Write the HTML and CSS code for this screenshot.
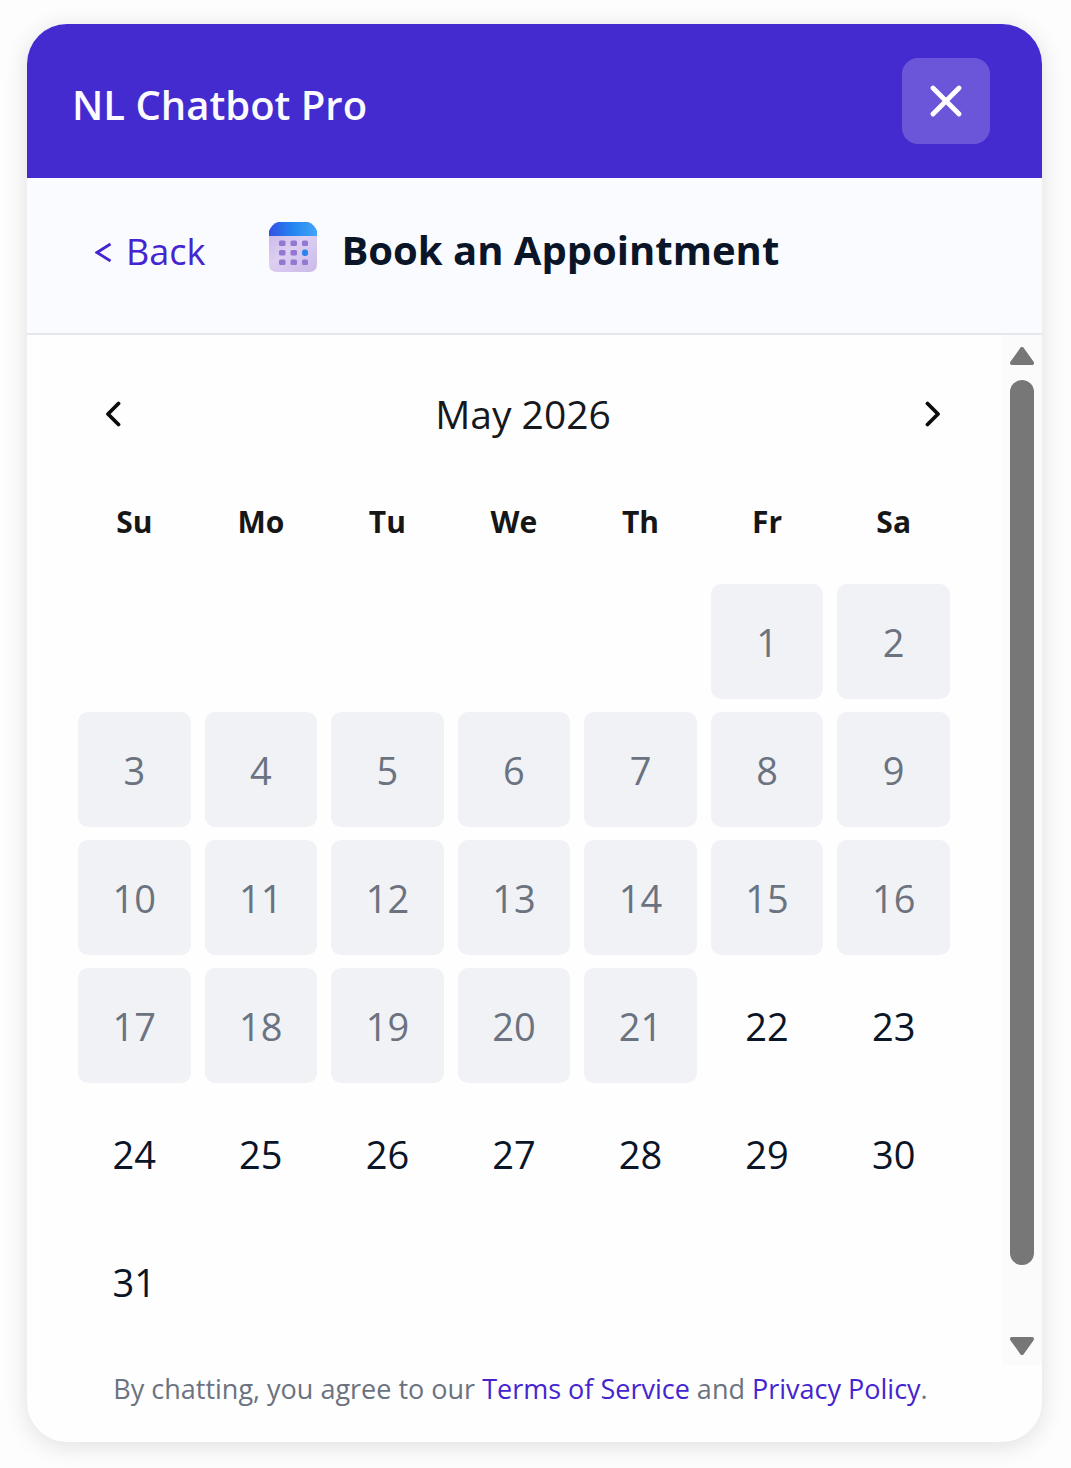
FILE: index.html
```html
<!DOCTYPE html>
<html lang="en">
<head>
<meta charset="utf-8">
<meta name="viewport" content="width=device-width, initial-scale=1">
<title>NL Chatbot Pro</title>
<link rel="stylesheet" href="styles.css">
</head>
<body>
<main class="widget">
  <header class="widget-header">
    <h1 class="widget-title">NL Chatbot Pro</h1>
    <button class="close-button" type="button" aria-label="Close">
      <svg width="32" height="32" viewBox="0 0 32 32" fill="none" stroke="#fff" stroke-width="4.800" stroke-linecap="round"><path d="M3 3 29 29M29 3 3 29"/></svg>
    </button>
  </header>

  <div class="toolbar">
    <button class="back-button" type="button"><svg width="17" height="20" viewBox="0 0 17 20" fill="none" stroke="currentColor" stroke-width="2.800" aria-hidden="true"><path d="M15.500 2 2 10.500l13.500 8.500"/></svg>Back</button>
    <h2 class="toolbar-title">
      <svg class="calendar-icon" width="48" height="50" viewBox="0 0 48 50" aria-hidden="true">
        <defs>
          <linearGradient id="top" x1="0" y1="0" x2="1" y2="0"><stop offset="0" stop-color="#3350e4"/><stop offset=".5" stop-color="#2485f0"/><stop offset="1" stop-color="#43a5f8"/></linearGradient>
          <linearGradient id="page" x1="0" y1="0" x2="1" y2="1"><stop offset="0" stop-color="#cbbce9"/><stop offset=".4" stop-color="#dccff1"/><stop offset="1" stop-color="#c9b9e9"/></linearGradient>
        </defs>
        <path d="M0 14h48v28q0 8-8 8H8q-8 0-8-8z" fill="url(#page)"/>
        <path d="M0 14V9Q3 2 9 0h30q6 2 9 9v5z" fill="url(#top)"/>
        <g fill="#9476d3">
          <rect x="10" y="18.500" width="6.500" height="5.500" rx="1.500"/><rect x="21.500" y="18.500" width="6.500" height="5.500" rx="1.500"/><rect x="33" y="18.500" width="6" height="5.500" rx="1.500"/>
          <rect x="10" y="28" width="6.500" height="5.500" rx="1.500"/><rect x="21.500" y="28" width="6.500" height="5.500" rx="1.500"/>
          <rect x="10" y="37.500" width="6.500" height="5.500" rx="1.500"/><rect x="21.500" y="37.500" width="6.500" height="5.500" rx="1.500"/><rect x="33" y="37.500" width="6" height="5.500" rx="1.500"/>
        </g>
        <rect x="33" y="27.500" width="6" height="6.500" rx="2.500" fill="#2b83ee"/>
      </svg>
      Book an Appointment
    </h2>
  </div>

  <div class="content">
    <section class="calendar" aria-labelledby="month">
      <div class="month-bar">
        <button class="month-button" type="button" aria-label="Previous month">
          <svg width="18" height="26" viewBox="0 0 18 26" fill="none" stroke="#0b0b0f" stroke-width="3.800" stroke-linecap="round" stroke-linejoin="round"><path d="M14.500 2.500 4 13l10.500 10.500"/></svg>
        </button>
        <h3 class="month-name" id="month">May 2026</h3>
        <button class="month-button" type="button" aria-label="Next month">
          <svg width="18" height="26" viewBox="0 0 18 26" fill="none" stroke="#0b0b0f" stroke-width="3.800" stroke-linecap="round" stroke-linejoin="round"><path d="M3.500 2.500 14 13 3.500 23.500"/></svg>
        </button>
      </div>
      <table class="days">
        <thead>
          <tr><th scope="col">Su</th><th scope="col">Mo</th><th scope="col">Tu</th><th scope="col">We</th><th scope="col">Th</th><th scope="col">Fr</th><th scope="col">Sa</th></tr>
        </thead>
        <tbody>
          <tr><td></td><td></td><td></td><td></td><td></td><td><button class="day" disabled>1</button></td><td><button class="day" disabled>2</button></td></tr>
          <tr><td><button class="day" disabled>3</button></td><td><button class="day" disabled>4</button></td><td><button class="day" disabled>5</button></td><td><button class="day" disabled>6</button></td><td><button class="day" disabled>7</button></td><td><button class="day" disabled>8</button></td><td><button class="day" disabled>9</button></td></tr>
          <tr><td><button class="day" disabled>10</button></td><td><button class="day" disabled>11</button></td><td><button class="day" disabled>12</button></td><td><button class="day" disabled>13</button></td><td><button class="day" disabled>14</button></td><td><button class="day" disabled>15</button></td><td><button class="day" disabled>16</button></td></tr>
          <tr><td><button class="day" disabled>17</button></td><td><button class="day" disabled>18</button></td><td><button class="day" disabled>19</button></td><td><button class="day" disabled>20</button></td><td><button class="day" disabled>21</button></td><td><button class="day">22</button></td><td><button class="day">23</button></td></tr>
          <tr><td><button class="day">24</button></td><td><button class="day">25</button></td><td><button class="day">26</button></td><td><button class="day">27</button></td><td><button class="day">28</button></td><td><button class="day">29</button></td><td><button class="day">30</button></td></tr>
          <tr><td><button class="day">31</button></td><td></td><td></td><td></td><td></td><td></td><td></td></tr>
        </tbody>
      </table>
    </section>

    <div class="scrollbar">
      <button class="scroll-button scroll-up" type="button" aria-label="Scroll up">
        <svg width="24" height="18" viewBox="0 0 24 18" fill="#777" stroke="#777" stroke-width="4" stroke-linejoin="round"><path d="M12 2 22 16H2z"/></svg>
      </button>
      <div class="scroll-thumb"></div>
      <div class="scroll-rest"></div>
      <button class="scroll-button scroll-down" type="button" aria-label="Scroll down">
        <svg width="24" height="18" viewBox="0 0 24 18" fill="#777" stroke="#777" stroke-width="4" stroke-linejoin="round"><path d="M12 16 2 2h20z"/></svg>
      </button>
    </div>
  </div>

  <footer class="legal">By chatting, you agree to our <a href="#terms">Terms of Service</a> and <a href="#privacy">Privacy Policy</a>.</footer>
</main>
</body>
</html>
```

FILE: styles.css
```css
* {
  box-sizing: border-box;
}

body {
  margin: 0;
  padding: 24px 29px 26px 27px;
  background: #fdfdfd;
  font-family: "Open Sans", "Noto Sans", sans-serif;
  color: #0b1528;
}

button {
  margin: 0;
  padding: 0;
  border: 0;
  background: none;
  font: inherit;
  color: inherit;
  cursor: pointer;
}

svg {
  display: block;
}

h1,
h2,
h3 {
  margin: 0;
}

.widget {
  border-radius: 40px;
  background: #fefefe;
  box-shadow: 0 4px 24px rgba(0, 0, 0, 0.12);
  overflow: hidden;
}

.widget-header {
  display: flex;
  align-items: center;
  justify-content: space-between;
  height: 154px;
  padding: 0 52px 0 45px;
  background: #432bcf;
  color: #fafaff;
}

.widget-title {
  padding-top: 8px;
  font-size: 40px;
  font-weight: 600;
  line-height: 56px;
}

.close-button {
  display: grid;
  place-items: center;
  width: 88px;
  height: 86px;
  border-radius: 16px;
  background: #6b55d8;
}

.toolbar {
  display: flex;
  align-items: center;
  gap: 64px;
  height: 157px;
  padding: 0 68px 12px;
  border-bottom: 2px solid #e5e7eb;
  background: #fafbfe;
}

.back-button {
  display: flex;
  align-items: center;
  gap: 14px;
  padding-top: 4px;
  font-size: 36px;
  line-height: 56px;
  color: #4525cf;
}

.toolbar-title {
  display: flex;
  align-items: center;
  gap: 24px;
  font-size: 40px;
  font-weight: 700;
  line-height: 56px;
}

.calendar-icon {
  margin-bottom: 6px;
}

.content {
  display: flex;
}

.calendar {
  flex: 1;
  padding: 51px 38px 13px 37px;
}

.month-bar {
  display: flex;
  align-items: center;
  justify-content: space-between;
  margin-bottom: 18px;
  padding: 0 3px 0 21px;
}

.month-button {
  display: grid;
  place-items: center;
  width: 56px;
  height: 56px;
}

.month-name {
  font-size: 39px;
  font-weight: 400;
  line-height: 56px;
  color: #17181c;
}

.days {
  width: 100%;
  table-layout: fixed;
  border-collapse: separate;
  border-spacing: 14px 13px;
}

.days th {
  height: 98px;
  padding: 0;
  font-size: 30px;
  font-weight: 700;
  line-height: 40px;
  color: #161616;
}

.days td {
  height: 115px;
  padding: 0;
}

.day {
  display: block;
  width: 100%;
  height: 115px;
  border-radius: 10px;
  font-size: 38px;
  line-height: 56px;
}

.day:disabled {
  background: #f1f2f6;
  color: #6b7280;
  cursor: default;
}

.scrollbar {
  display: flex;
  flex-direction: column;
  align-items: center;
  width: 40px;
  background: #fbfbfb;
}

.scroll-button {
  display: grid;
  place-items: center;
  width: 40px;
  height: 45px;
}

.scroll-up {
  padding-bottom: 4px;
}

.scroll-down {
  padding-top: 6px;
}

.scroll-thumb {
  flex: 16;
  width: 24px;
  border-radius: 12px;
  background: #777;
}

.scroll-rest {
  flex: 1;
}

.legal {
  padding: 4px 48px 33px 20px;
  font-size: 27px;
  line-height: 40px;
  text-align: center;
  color: #6b7280;
}

.legal a {
  color: #4525cf;
  text-decoration: none;
}
```
